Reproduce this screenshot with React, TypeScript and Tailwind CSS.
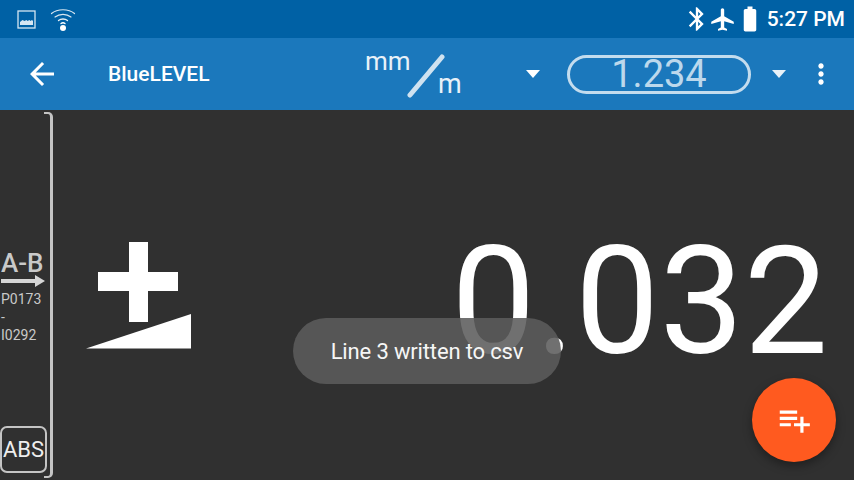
import { MdArrowBack, MdBluetooth, MdLocalAirport, MdBatteryFull, MdMoreVert, MdPlaylistAdd } from 'react-icons/md';

const Caret = ({ className }: { className: string }) => (
  <svg width="14" height="8" viewBox="0 0 14 8" className={className}>
    <path d="M0 0h14L7 8z" fill="currentColor" />
  </svg>
);

const PictureIcon = () => (
  <svg width="19" height="19" viewBox="0 0 19 19" className="text-[#d5e6f2]">
    <rect x="1" y="1" width="17" height="17" fill="none" stroke="currentColor" strokeWidth="1.3" />
    <path d="M3 15v-3l2.500-2 2 1 2-1 1 1 2-1 1 1 1.500-1 1 1v4z" fill="currentColor" />
  </svg>
);

const WifiIcon = () => (
  <svg width="26" height="26" viewBox="0 0 26 26" fill="none" stroke="white" strokeLinecap="round">
    <path d="M1.500 8.500C7.500 3.500 18.500 3.500 24.500 8.500" strokeWidth="1.200" opacity=".85" />
    <path d="M5 12C9.500 8.500 16.500 8.500 21 12" strokeWidth="1.200" opacity=".85" />
    <path d="M8.500 15.500C11 13.500 15 13.500 17.500 15.500" strokeWidth="1.300" opacity=".9" />
    <path d="M11 18.500C12.200 17.600 13.800 17.600 15 18.500" strokeWidth="1.300" />
    <circle cx="13" cy="23" r="3" fill="white" stroke="none" />
  </svg>
);

const DeltaSign = () => (
  <svg width="106" height="108" viewBox="0 0 106 108" className="text-white">
    <path d="M43 1h19v30h30v19H62v31H43V50H12V31h31z" fill="currentColor" />
    <path d="M0 107.500L105 73v34.500z" fill="currentColor" />
  </svg>
);

const App = () => (
  <div className="w-[854px] h-[480px] overflow-hidden flex flex-col bg-[#303030] font-['Roboto',sans-serif] text-white">
    <div className="h-[38px] shrink-0 bg-[#0061a5] flex items-center pl-[17px] pr-[9px]">
      <PictureIcon />
      <div className="ml-[14px] -mt-[2px]"><WifiIcon /></div>
      <div className="ml-auto flex items-center">
        <MdBluetooth className="w-[28px] h-[28px]" />
        <MdLocalAirport className="w-[27px] h-[27px] ml-[-2px]" />
        <MdBatteryFull className="w-[30px] h-[30px] ml-[-1px]" />
        <span className="ml-[2px] text-[21px] font-medium leading-none">5:27 PM</span>
      </div>
    </div>

    <div className="h-[72px] shrink-0 bg-[#1b78bc] flex items-center">
      <MdArrowBack className="w-[36px] h-[36px] ml-[24px]" />
      <span className="ml-[48px] text-[21px] font-medium leading-none w-[102px] whitespace-nowrap">BlueLEVEL</span>
      <div className="relative ml-[154px] w-[100px] h-[72px] text-[#e8f1f8]">
        <span className="absolute left-[1px] top-[10px] text-[26px] leading-none">mm</span>
        <span className="absolute left-[74px] top-[33px] text-[27px] leading-none">m</span>
        <svg width="40" height="44" viewBox="0 0 40 44" className="absolute left-[43px] top-[16px] text-[#cfe2f0]">
          <path d="M3 41L35 3" stroke="currentColor" strokeWidth="5" strokeLinecap="round" fill="none" />
        </svg>
      </div>
      <Caret className="ml-[62px] text-white" />
      <div className="ml-[27px] w-[184px] h-[39px] rounded-full border-[3px] border-[#c3dcee] flex items-center justify-center text-[38px] leading-none text-[#bcd8ec]">
        1.234
      </div>
      <Caret className="ml-[21px] text-[#e8f1f8]" />
      <MdMoreVert className="w-[32px] h-[32px] ml-[19px]" />
    </div>

    <div className="relative flex-1 flex">
      <div className="relative w-[54px] shrink-0 flex flex-col pt-[2px] pb-[2px]">
        <div className="absolute left-[44px] top-[2px] bottom-[2px] w-[9px] border-r-[3px] border-y-[2px] border-[#c4c4c4] rounded-r-[5px]" />
        <div className="pt-[139px] pl-[1px] flex flex-col text-[#c9c9c9]">
          <span className="text-[26px] leading-[24px] font-medium">A-B</span>
          <svg width="44" height="12" viewBox="0 0 44 12" className="text-[#d6d6d6]">
            <path d="M0 4h34V0l10 6-10 6V8H0z" fill="currentColor" />
          </svg>
          <span className="text-[14px] leading-[18px] mt-[3px]">P0173</span>
          <span className="text-[14px] leading-[18px]">-</span>
          <span className="text-[14px] leading-[18px]">I0292</span>
        </div>
        <div className="mt-auto mb-[5px] w-[47px] h-[47px] rounded-[7px] border-2 border-[#c4c4c4] flex items-center justify-center text-[22px] leading-none text-[#eeeeee]">
          ABS
        </div>
      </div>
      <div className="ml-[32px] mt-[131px] shrink-0"><DeltaSign /></div>
      <div className="ml-auto mr-[26px] mt-[104px] text-[150px] leading-[176px] whitespace-nowrap">0.032</div>

      <div className="absolute left-[293px] top-[208px] w-[268px] h-[66px] rounded-full bg-[#5b5b5b]/[0.875] flex items-center justify-center text-[22px] tracking-[-0.15px] text-[#f6f6f6]">
        Line 3 written to csv
      </div>
      <div className="absolute left-[752px] top-[268px] w-[84px] h-[84px] rounded-full bg-[#ff5a1f] shadow-[0_4px_10px_rgba(0,0,0,0.35)] flex items-center justify-center">
        <MdPlaylistAdd className="w-[38px] h-[38px]" />
      </div>
    </div>
  </div>
);

export default App;
